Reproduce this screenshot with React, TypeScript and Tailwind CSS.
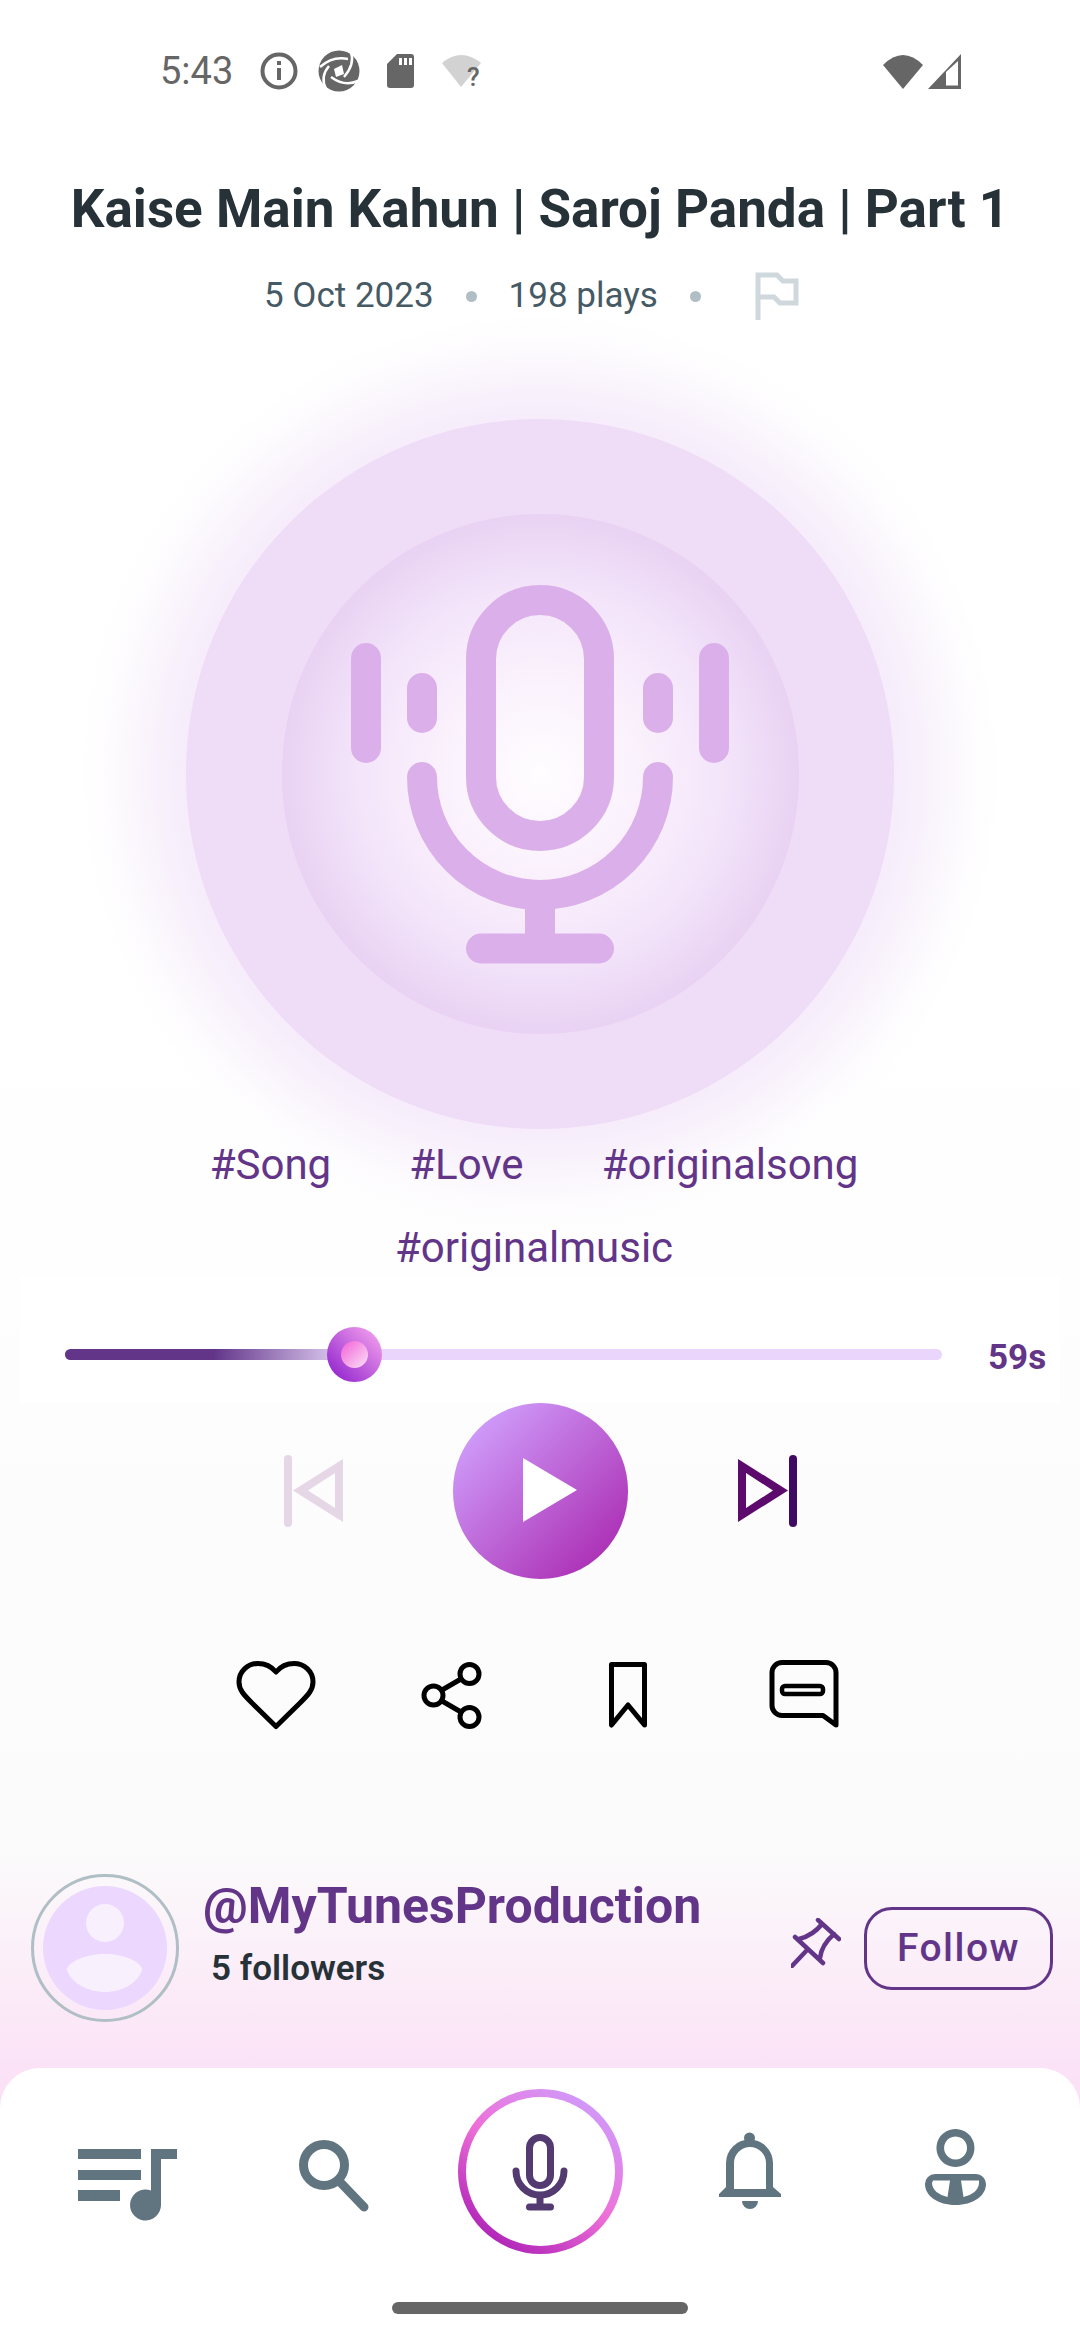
const tags = ["#Song", "#Love", "#originalsong", "#originalmusic"];

const StatusBar = () => (
	<div className="flex h-[142px] items-center pl-[160px] pr-[119px] text-[#666666]">
		<span className="w-[72px] whitespace-nowrap text-[38px] leading-none">5:43</span>
		<svg className="ml-[28px]" width="38" height="38" viewBox="261 53 38 38">
			<circle cx="280" cy="72" r="16.5" fill="none" stroke="#666666" strokeWidth="4" />
			<rect x="278" y="69" width="4" height="12" fill="#666666" />
			<rect x="278" y="62" width="4" height="4" fill="#666666" />
		</svg>
		<svg className="ml-[20px]" width="42" height="42" viewBox="319 51 42 42">
			<circle cx="340" cy="72" r="20.5" fill="#666666" />
			<path d="M321 68 C330 60 340 58 349 60 M352 53 C355 62 352 70 345 78 M359 82 C350 86 340 84 332 78 M327 90 C323 82 324 74 330 67" fill="none" stroke="#ffffff" strokeWidth="2.5" />
			<path d="M335 70 L343 66 L345 75 L337 78 Z" fill="#ffffff" />
		</svg>
		<svg className="ml-[27px]" width="27" height="35" viewBox="388 54 27 35">
			<path d="M398 54 H412 a3 3 0 0 1 3 3 V85 a3 3 0 0 1 -3 3 H391 a3 3 0 0 1 -3 -3 V64 Z" fill="#666666" />
			<rect x="400" y="58" width="3" height="7" fill="#ffffff" />
			<rect x="405" y="58" width="3" height="7" fill="#ffffff" />
			<rect x="410" y="58" width="3" height="7" fill="#ffffff" />
		</svg>
		<svg className="ml-[28px]" width="44" height="44" viewBox="443 50 44 44">
			<path d="M443 64 Q462 48 482 64 L462 88 Z" fill="#d2d2d2" />
			<text x="468" y="87" fontFamily="Roboto, sans-serif" fontSize="26" fontWeight="500" fill="#666666">?</text>
		</svg>
		<div className="flex-1" />
		<svg width="40" height="36" viewBox="883 52 40 36">
			<path d="M883 64 Q903 44 923 64 L903 88 Z" fill="#666666" />
		</svg>
		<svg className="ml-[5px]" width="33" height="35" viewBox="928 53 33 35">
			<path d="M928 88 L961 53 V88 Z" fill="#666666" />
			<path d="M946 84.5 V71 L958 60 V84.5 Z" fill="#ffffff" />
		</svg>
	</div>
);

const Artwork = () => (
	<div className="relative mx-auto mt-[98px] flex h-[710px] w-[708px] items-center justify-center">
		{/* glow behind the disc */}
		<div className="absolute left-[-106px] top-[-105px] h-[920px] w-[920px] rounded-full bg-[radial-gradient(closest-side,#f0e0f7_0%,#f0e0f7_70%,#f6ecfb_77%,#f9f3fc_85%,#fdfbfe_93%,#ffffff00_100%)]" />
		<div className="relative flex h-[710px] w-[708px] items-center justify-center rounded-full bg-[#efdcf6]">
			<div className="flex h-[520px] w-[517px] items-center justify-center rounded-full bg-[radial-gradient(closest-side,#fffdff_0%,#f9effc_45%,#f3e4fa_72%,#e9d2f3_100%)]">
				<svg width="400" height="400" viewBox="340 575 400 400" fill="none" stroke="#dbb0ea" strokeWidth="30" strokeLinecap="round">
					<rect x="481" y="601" width="118" height="236" rx="59" />
					<path d="M366 659 V749 M422 689 V719 M658 689 V719 M714 659 V749" />
					<path d="M422 778 A118 118 0 0 0 658 778" />
					<path d="M540 896 V949" strokeLinecap="butt" />
					<path d="M481 949.5 H599" />
				</svg>
			</div>
		</div>
	</div>
);

const Tags = () => (
	<div className="relative flex w-full flex-wrap justify-center gap-x-[78px] gap-y-[27px] pl-[204px] pr-[216px] pt-[8px] text-[42px] leading-[56px] text-[#623589]">
		{tags.map((t) => (
			<span key={t}>{t}</span>
		))}
	</div>
);

const Seekbar = () => (
	<div className="mx-[20px] flex h-[127px] items-center bg-white/70 pl-[45px] pt-[30px]">
		<div className="relative h-[11px] w-[877px] rounded-full bg-[#ead6fd]">
			<div className="absolute left-0 top-0 h-[11px] w-[270px] rounded-full bg-[linear-gradient(90deg,#623589_0%,#623589_55%,#d8c5ec_100%)]" />
			<div className="absolute left-[262px] top-[-22px] flex h-[55px] w-[55px] items-center justify-center rounded-full bg-[linear-gradient(225deg,#fbaaf0_0%,#9a2fd0_85%)]">
				<div className="h-[27px] w-[27px] rounded-full bg-[linear-gradient(135deg,#f45fd8_0%,#f9d6f4_90%)]" />
			</div>
		</div>
		<span className="ml-[46px] pt-[5px] text-[35px] font-bold leading-none text-[#623589]">59s</span>
	</div>
);

const Controls = () => (
	<div className="flex items-center justify-center gap-[110px]">
		<svg width="59" height="72" viewBox="284 1456 59 72" fillRule="evenodd">
			<rect x="284" y="1456" width="8" height="72" rx="4" fill="#e5d7e6" />
			<path d="M343 1460 V1523 L293 1491.5 Z M335 1474 L308 1491.5 L335 1509 Z" fill="#e5d7e6" />
		</svg>
		<button className="flex h-[176px] w-[175px] items-center justify-center rounded-full bg-[linear-gradient(135deg,#d09ffc_10%,#ab2db3_90%)]">
			<svg className="ml-[20px] mb-[2px]" width="54" height="64" viewBox="0 0 54 64">
				<path d="M0 0 L54 32 L0 64 Z" fill="#ffffff" />
			</svg>
		</button>
		<svg width="59" height="72" viewBox="739 1456 59 72" fillRule="evenodd">
			<path d="M739 1460 V1523 L789 1491.5 Z M747 1474 L774 1491.5 L747 1509 Z" fill="#5c0a6c" />
			<rect x="790" y="1456" width="8" height="72" rx="4" fill="#3f0a63" />
		</svg>
	</div>
);

const Actions = () => (
	<div className="mx-auto mt-[80px] grid w-[704px] grid-cols-4 justify-items-center">
		<svg width="84" height="72" viewBox="235 1658 84 72" fill="none" stroke="#000000" strokeWidth="5" strokeLinejoin="round">
			<path d="M277 1725.5 L253 1702 C245 1694 240 1689 240 1681 C240 1670 249 1662.5 259 1662.5 C266 1662.5 272 1665 277 1671 C282 1665 288 1662.5 295 1662.5 C305 1662.5 314 1670 314 1681 C314 1689 309 1694 301 1702 Z" />
		</svg>
		<svg width="72" height="72" viewBox="417 1658 72 72" fill="none" stroke="#000000" strokeWidth="5">
			<circle cx="470.5" cy="1673" r="9.5" />
			<circle cx="434.5" cy="1694.5" r="9.5" />
			<circle cx="470.5" cy="1716" r="9.5" />
			<path d="M443 1689 L462 1678 M443 1700 L462 1711" />
		</svg>
		<svg width="72" height="72" viewBox="592 1658 72 72" fill="none" stroke="#000000" strokeWidth="5" strokeLinejoin="round">
			<path d="M611.5 1663.5 H644.5 V1724 L628 1704 L611.5 1724 Z" />
		</svg>
		<svg width="76" height="72" viewBox="767 1658 76 72" fill="none" stroke="#000000" strokeWidth="5" strokeLinejoin="round">
			<path d="M783 1661.5 H827 a10 10 0 0 1 10 10 V1724 L824 1714.5 H783 a10 10 0 0 1 -10 -10 V1671.5 a10 10 0 0 1 10 -10 Z" />
			<rect x="783" y="1685" width="41" height="8" rx="3" strokeWidth="4.5" />
		</svg>
	</div>
);

const Author = () => (
	<div className="mt-[143px] flex h-[148px] items-center pl-[31px] pr-[27px]">
		<div className="flex h-[148px] w-[148px] shrink-0 items-center justify-center rounded-full border-[3px] border-[#b0bec5]">
			<svg width="124" height="124" viewBox="43 1885 124 124">
				<circle cx="105" cy="1947" r="62" fill="#ecd7fe" />
				<circle cx="105" cy="1922" r="19" fill="#f9f0fd" />
				<path d="M105 1953 C124 1953 142 1961 142 1969 C138 1982 122 1991 105 1991 C88 1991 71 1982 67 1969 C67 1961 86 1953 105 1953 Z" fill="#f9f0fd" />
			</svg>
		</div>
		<div className="ml-[24px] mt-[4px] flex-1 self-start">
			<p className="whitespace-nowrap text-[50px] font-bold leading-[56px] text-[#623589]">@MyTunesProduction</p>
			<p className="ml-[8px] mt-[15px] text-[35px] font-semibold leading-[40px] text-[#263238]">5 followers</p>
		</div>
		<svg className="mb-[10px] mr-[23px]" width="50" height="50" viewBox="790 1917 50 50" fill="none" stroke="#623589" strokeWidth="4.5" strokeLinecap="round" strokeLinejoin="round">
			<path d="M817 1919 L838 1938 M794 1936 L822 1962 M798 1938 C806 1936 814 1932 821 1923 M833 1933 C825 1940 820 1948 819 1957 M791 1965 L807 1948" />
		</svg>
		<button className="flex h-[83px] w-[189px] items-center justify-center rounded-[28px] border-[3px] border-[#623589] text-[39px] font-medium tracking-[1.5px] text-[#623589]">
			Follow
		</button>
	</div>
);

const BottomNav = () => (
	<div className="mt-[46px] flex-1 rounded-t-[40px] bg-white px-[25px] pt-[21px]">
		<div className="grid h-[165px] grid-cols-5 items-center justify-items-center">
			<svg width="120" height="120" viewBox="68 2110 120 120" fill="#607580">
				<rect x="78" y="2147" width="63" height="10" />
				<rect x="78" y="2168" width="63" height="10" />
				<rect x="78" y="2188" width="42" height="11" />
				<path d="M151 2147 H177 V2157 H161 V2203 A15.5 15.5 0 1 1 151 2188.5 Z" />
			</svg>
			<svg width="120" height="120" viewBox="274 2110 120 120" fill="none" stroke="#607580" strokeWidth="9" strokeLinecap="round">
				<circle cx="324" cy="2163" r="20.5" />
				<path d="M340 2180 L364 2205" />
			</svg>
			<div className="flex h-[165px] w-[165px] items-center justify-center rounded-full bg-[linear-gradient(215deg,#cf9cfb_10%,#ee6fd8_50%,#ab1fb5_90%)]">
				<div className="flex h-[149px] w-[149px] items-center justify-center rounded-full bg-white">
					<svg width="60" height="84" viewBox="510 2129 60 84" fill="none" stroke="#533a71" strokeWidth="7" strokeLinecap="round">
						<rect x="529.5" y="2136.5" width="21" height="48" rx="10.5" />
						<path d="M516 2170 A24 24 0 0 0 564 2170" />
						<path d="M540 2194 V2206" strokeLinecap="butt" />
						<path d="M529.5 2206 H550.5" />
					</svg>
				</div>
			</div>
			<svg width="120" height="120" viewBox="686 2110 120 120" fill="#607580" fillRule="evenodd">
				<circle cx="749.5" cy="2136" r="5.5" />
				<path d="M719 2195 V2192 L726 2185 V2161 A23.5 23.5 0 0 1 773 2161 V2185 L781 2192 V2195 Z M734 2187 H766 V2161 A16 16 0 0 0 734 2161 Z" />
				<path d="M742 2199 H758 A8 8 0 0 1 742 2199 Z" />
			</svg>
			<svg width="120" height="120" viewBox="892 2110 120 120" fill="#607580" fillRule="evenodd">
				<path d="M955.5 2127 A19 19 0 1 1 955.4 2127 Z M955.5 2134.5 A11.5 11.5 0 1 0 955.6 2134.5 Z" />
				<path d="M935 2172 H976 A10 10 0 0 1 986 2182 C986 2194 973 2203 955.5 2203 C938 2203 925 2194 925 2182 A10 10 0 0 1 935 2172 Z M933 2178.5 H950 L947.5 2195 C939 2193 932 2188 932 2181 Z M961 2178.5 H979 V2181 C979 2188 972 2193 963.5 2195 Z" />
			</svg>
		</div>
		<div className="mx-auto mt-[48px] h-[12px] w-[296px] rounded-full bg-[#666666]" />
	</div>
);

export default function App() {
	return (
		<div className="flex h-[2340px] w-[1080px] flex-col overflow-hidden bg-[linear-gradient(180deg,#ffffff_0px,#ffffff_1000px,#fdfdfd_1400px,#fbfbfb_1850px,#fbe0f6_2090px,#fbe0f6_2340px)] font-['Roboto',sans-serif]">
			<StatusBar />
			<h1 className="mt-[37px] whitespace-nowrap text-center text-[53px] font-bold leading-[60px] text-[#263238]">
				Kaise Main Kahun | Saroj Panda | Part 1
			</h1>
			<div className="mt-[32px] flex h-[50px] items-center gap-[32px] pl-[264px] text-[35px] text-[#455a64]">
				<span>5 Oct 2023</span>
				<span className="h-[11px] w-[11px] rounded-full bg-[#b0bec5]" />
				<span>198 plays</span>
				<span className="h-[11px] w-[11px] rounded-full bg-[#b0bec5]" />
				<svg className="ml-[22px]" width="44" height="48" viewBox="754 273 44 48" fill="none" stroke="#cfd8dc" strokeWidth="5">
					<path d="M757 321 V276 H776 L782 282 H795 V304 H779 L773 298 H757" />
				</svg>
			</div>
			<Artwork />
			<Tags />
			<Seekbar />
			<Controls />
			<Actions />
			<Author />
			<BottomNav />
		</div>
	);
}
